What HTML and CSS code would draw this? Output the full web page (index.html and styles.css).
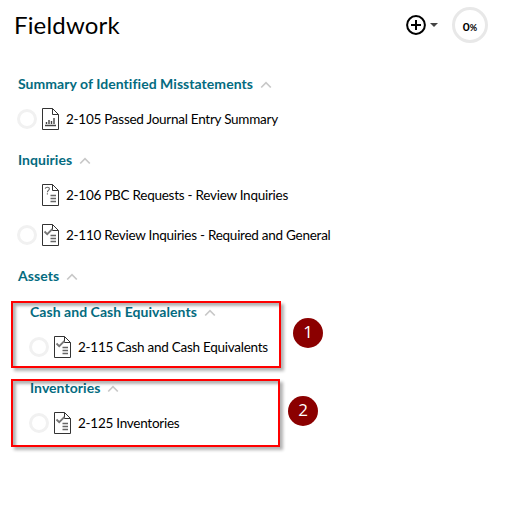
FILE: index.html
```html
<!DOCTYPE html>
<html lang="en">
<head>
<meta charset="utf-8">
<title>Fieldwork</title>
<link rel="stylesheet" href="styles.css">
</head>
<body>
<svg class="defs" width="0" height="0" aria-hidden="true">
  <symbol id="page" viewBox="0 0 17 22">
    <path d="M.5.5h10l6 6v15H.5zM10.500.5v6h6" fill="none" stroke="#333"/>
  </symbol>
  <symbol id="lines" viewBox="0 0 17 22">
    <path d="M8.500 11.500h5.500M8.500 14.500h5.500M8.500 17.500h5.500" fill="none" stroke="#666" stroke-width="1.300"/>
  </symbol>
  <symbol id="doc-chart" viewBox="0 0 17 22">
    <use href="#page"/>
    <path d="M3 17.500h11M4.500 16v-2M7 16v-4M9.500 16v-3M12 16v-6" fill="none" stroke="#444" stroke-width="1.400"/>
  </symbol>
  <symbol id="doc-question" viewBox="0 0 17 22">
    <use href="#page"/><use href="#lines"/>
    <path d="M3.200 4.700q.3-1.500 2.200-1.500 2 0 2 1.600c0 1.600-2 1.500-2 3.400M5.400 9.200v1.200" fill="none" stroke="#666" stroke-width="1.100"/>
  </symbol>
  <symbol id="doc-check" viewBox="0 0 17 22">
    <use href="#page"/><use href="#lines"/>
    <path d="M2.500 7.500l2.700 2.700 5.300-5.400" fill="none" stroke="#777" stroke-width="1.800"/>
  </symbol>
  <symbol id="chevron" viewBox="0 0 12 8">
    <path d="M1.200 6.500L6 1.700l4.800 4.800" fill="none" stroke="#c8c8c8" stroke-width="1.700"/>
  </symbol>
</svg>
<header class="header">
  <h1 class="title">Fieldwork</h1>
  <div class="add">
    <svg class="plus" viewBox="0 0 20 20"><circle cx="10" cy="10" r="8.900"/><path d="M10 5v10M5 10h10"/></svg>
    <svg class="caret" viewBox="0 0 8 4"><path d="M0 0h8L4 4z"/></svg>
  </div>
  <div class="progress">0<span class="percent">%</span></div>
</header>
<main class="tree">
  <h2 class="heading"><span>Summary of Identified Misstatements</span><svg class="chevron"><use href="#chevron"/></svg></h2>
  <div class="item"><span class="status"></span><svg class="doc"><use href="#doc-chart"/></svg><span class="name">2-105 Passed Journal Entry Summary</span></div>
  <h2 class="heading"><span>Inquiries</span><svg class="chevron"><use href="#chevron"/></svg></h2>
  <div class="item"><span class="status none"></span><svg class="doc"><use href="#doc-question"/></svg><span class="name">2-106 PBC Requests - Review Inquiries</span></div>
  <div class="item"><span class="status"></span><svg class="doc"><use href="#doc-check"/></svg><span class="name">2-110 Review Inquiries - Required and General</span></div>
  <h2 class="heading"><span>Assets</span><svg class="chevron"><use href="#chevron"/></svg></h2>
  <section class="group">
    <h3 class="heading"><span>Cash and Cash Equivalents</span><svg class="chevron"><use href="#chevron"/></svg></h3>
    <div class="item"><span class="status"></span><svg class="doc"><use href="#doc-check"/></svg><span class="name">2-115 Cash and Cash Equivalents</span></div>
    <div class="callout callout-one"></div>
    <div class="badge badge-one">1</div>
  </section>
  <section class="group">
    <h3 class="heading"><span>Inventories</span><svg class="chevron"><use href="#chevron"/></svg></h3>
    <div class="item"><span class="status"></span><svg class="doc"><use href="#doc-check"/></svg><span class="name">2-125 Inventories</span></div>
    <div class="callout callout-two"></div>
    <div class="badge badge-two">2</div>
  </section>
</main>
</body>
</html>
```
FILE: styles.css
```css
* { box-sizing: border-box; }
body {
  min-height: 506px;
  margin: 0;
  background: #fff;
  color: #000;
  font-family: Lato, "Liberation Sans", sans-serif;
  font-size: 14px;
}
svg { display: block; flex: none; }
.defs { position: absolute; }
.header {
  display: flex;
  align-items: center;
  height: 63px;
  padding: 0 20px 13px 14px;
}
.title { margin: 0 auto 0 0; font-size: 24px; font-weight: 400; line-height: 30px; letter-spacing: .17px; }
.add { display: flex; align-items: center; gap: 4px; margin-right: 14px; }
.plus { width: 20px; height: 20px; fill: none; stroke: #000; stroke-width: 2; }
.caret { width: 8px; height: 4px; fill: #444; }
.progress {
  display: flex;
  align-items: baseline;
  justify-content: center;
  width: 36px;
  height: 36px;
  padding-top: 3px;
  border: 3px solid #e8e8e8;
  border-radius: 50%;
  font-size: 12px;
  font-weight: 700;
  line-height: 28px;
}
.percent { font-size: 9px; }
.tree { padding-left: 18px; }
.heading {
  display: flex;
  align-items: center;
  gap: 7px;
  height: 30px;
  margin: 6px 0 0;
  color: #046b80;
  font-size: 14px;
  font-weight: 700;
  letter-spacing: .05px;
  white-space: nowrap;
}
.heading span { margin-top: -2px; }
.chevron { width: 12px; height: 8px; margin-top: 1px; }
.item { display: flex; align-items: center; height: 40px; white-space: nowrap; }
.name { font-size: 13.500px; letter-spacing: -.26px; }
.status {
  flex: none;
  width: 20px;
  height: 20px;
  margin: 0 5px 0 -1px;
  border: 3px solid #f1f1f1;
  border-radius: 50%;
}
.status.none { border-color: transparent; }
.doc { width: 17px; height: 22px; margin-right: 7px; }
.group { position: relative; padding-left: 12px; }
.callout {
  position: absolute;
  left: -7px;
  border: 2px solid #f00;
  box-shadow: 3px 3px 3px rgba(0, 0, 0, .3), inset 3px 3px 3px rgba(0, 0, 0, .3);
}
.callout-one { top: 4px; width: 270px; height: 67px; }
.callout-two { top: 6px; width: 269px; height: 68px; }
.badge {
  position: absolute;
  width: 30px;
  height: 30px;
  border-radius: 50%;
  background: #8b0000;
  color: #fff;
  font: 17px/28px "Open Sans", sans-serif;
  text-align: center;
}
.badge-one { left: 275px; top: 21px; }
.badge-two { left: 270px; top: 23px; }
```
